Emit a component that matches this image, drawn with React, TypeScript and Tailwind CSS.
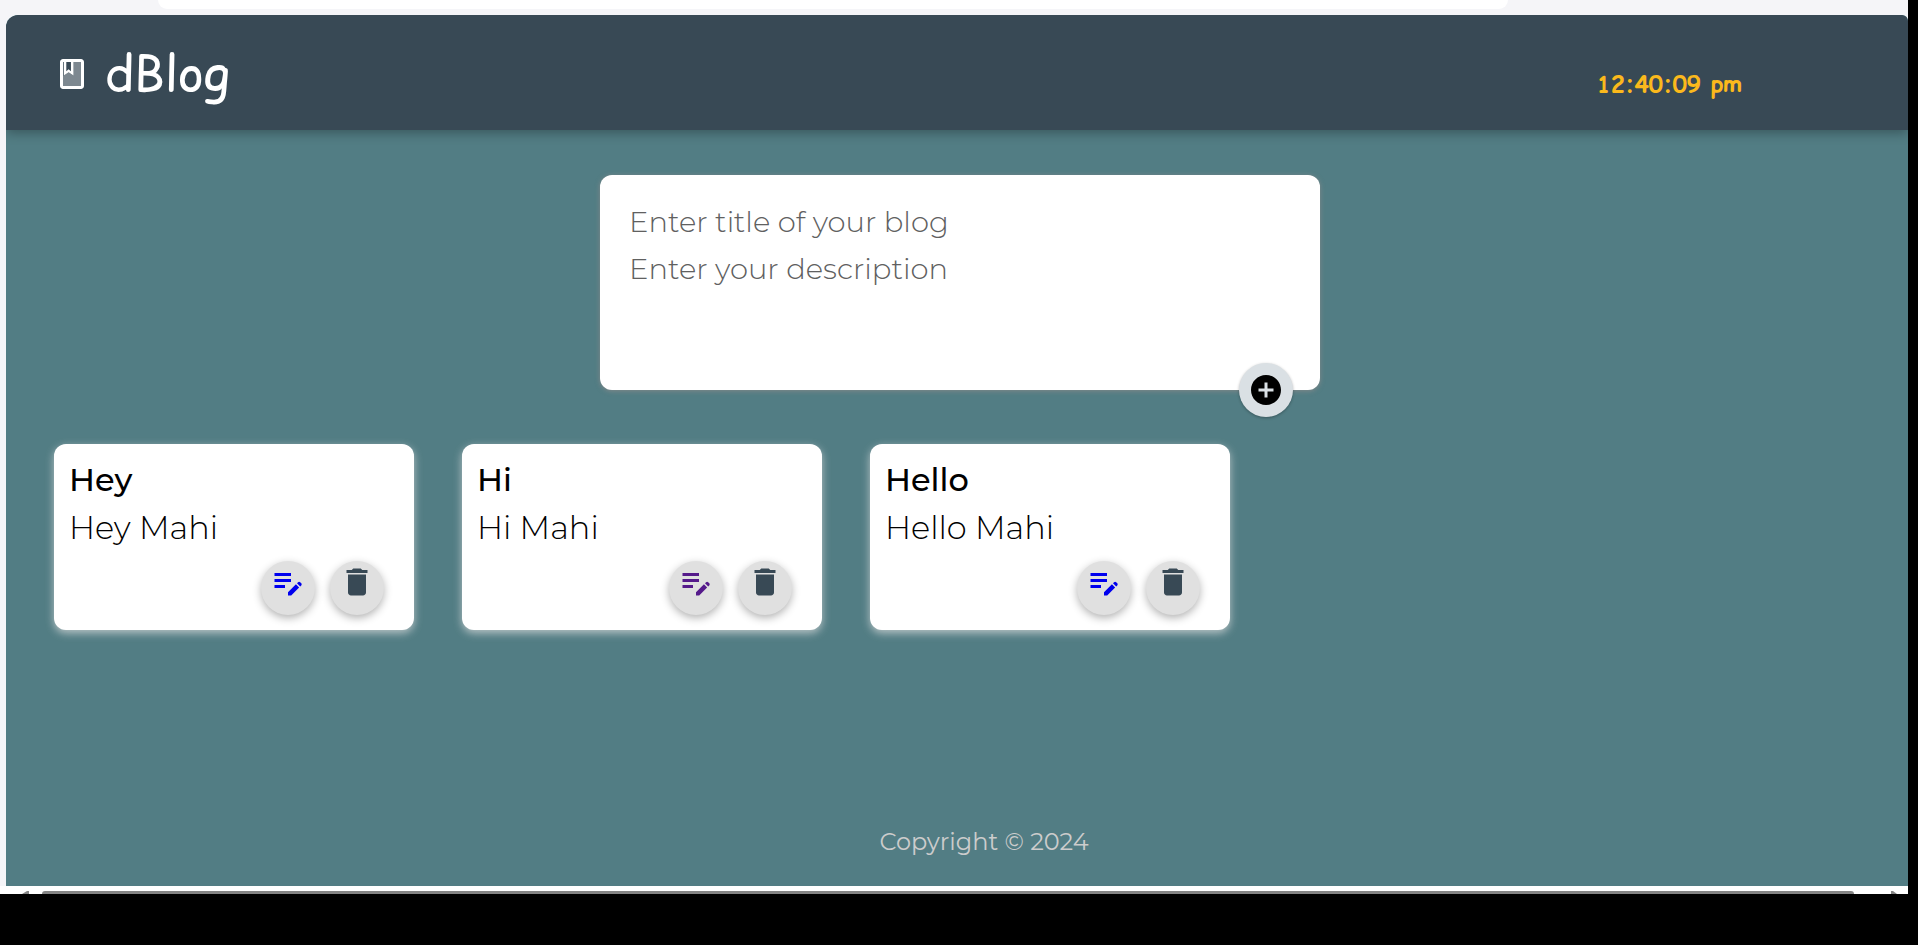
import { useState } from "react";
import { MdAddCircle, MdDelete, MdEditNote } from "react-icons/md";

type Post = { title: string; body: string; visited?: boolean };

const initialPosts: Post[] = [
  { title: "Hey", body: "Hey Mahi" },
  { title: "Hi", body: "Hi Mahi", visited: true },
  { title: "Hello", body: "Hello Mahi" },
];

function BookIcon() {
  return (
    <svg viewBox="0 0 24 24" className="size-9" fill="currentColor" aria-hidden="true">
      <path opacity="0.35" d="M13 4v9l-3.250-2.250L6.500 13H6v7h12V4z" />
      <path d="M18 2H6c-1.100 0-2 .9-2 2v16c0 1.100.9 2 2 2h12c1.100 0 2-.9 2-2V4c0-1.100-.9-2-2-2zm0 18H6V4h12v16z" />
      <path d="M6.500 3.500H8.200v6.700l1.550-1.400 1.550 1.400V3.500H13V13l-3.250-2.250L6.500 13z" />
    </svg>
  );
}

function Header() {
  return (
    <header className="flex h-[115px] items-center justify-between rounded-tl-xl rounded-tr-md bg-[#384955] pr-[167px] pl-12 shadow-[0_3px_12px_rgba(0,0,0,0.3)]">
      <div className="flex items-center gap-[15px] pt-[3px] text-white">
        <BookIcon />
        <h1 className="font-['Comic_Relief','Comic_Sans_MS','Comic_Neue',Lato,sans-serif] text-[49px] leading-[60px] font-normal">dBlog</h1>
      </div>
      <time className="pt-6 font-['Comic_Relief','Comic_Sans_MS','Comic_Neue',Lato,sans-serif] text-[23px] font-bold text-[#fbb91c]">
        12:40:09 pm
      </time>
    </header>
  );
}

function BlogForm() {
  return (
    <form
      onSubmit={(e) => e.preventDefault()}
      className="relative mx-auto flex h-[215px] w-full max-w-[720px] flex-col rounded-xl bg-white px-[29px] pt-[23px] shadow-[0_1px_5px_rgba(138,138,138,0.9)]"
    >
      <input
        aria-label="Title"
        placeholder="Enter title of your blog"
        className="h-[47px] text-[29px] font-light outline-none placeholder:text-[#606060]"
      />
      <textarea
        aria-label="Description"
        placeholder="Enter your description"
        className="h-[120px] resize-none text-[29px] leading-[47px] font-light outline-none placeholder:text-[#606060]"
      />
      <button
        aria-label="Add blog"
        className="absolute right-[27px] -bottom-[27px] flex size-[54px] items-center justify-center rounded-full bg-[#dae0e4] text-black shadow-[0_1px_3px_rgba(0,0,0,0.3)]"
      >
        <MdAddCircle className="size-9" />
      </button>
    </form>
  );
}

const roundButton =
  "flex size-[54px] justify-center rounded-full bg-[#e0e0e0] pt-[3px] shadow-[0_3px_9px_rgba(0,0,0,0.3)]";

function Card({ post, onDelete }: { post: Post; onDelete: () => void }) {
  return (
    <article className="flex h-[186px] w-[360px] flex-col rounded-xl bg-white pt-3 pr-[30px] pb-[15px] pl-[15px] text-black shadow-[0_3px_8px_rgba(220,220,220,0.75)]">
      <h2 className="text-[32px] leading-[48px] font-medium">{post.title}</h2>
      <p className="text-[32px] leading-[48px] font-light">{post.body}</p>
      <div className="mt-auto flex justify-end gap-[15px]">
        <a
          href="#edit"
          aria-label={`Edit ${post.title}`}
          className={`${roundButton} ${post.visited ? "text-[#551a8b]" : "text-[#0000ee]"}`}
        >
          <MdEditNote className="size-9" />
        </a>
        <button aria-label={`Delete ${post.title}`} onClick={onDelete} className={`${roundButton} text-[#384955]`}>
          <MdDelete className="size-9" />
        </button>
      </div>
    </article>
  );
}

export default function App() {
  const [posts, setPosts] = useState(initialPosts);

  return (
    <div className="flex min-h-screen flex-col bg-black pr-[10px] font-[Montserrat,Inter,sans-serif]">
      <div className="h-[15px] bg-[#f5f5f8] pr-[400px] pl-[158px]">
        <div className="h-[9px] rounded-b-[20px] bg-white" />
      </div>
      <div className="flex flex-1 flex-col bg-[#f5f5f8] pl-1.5">
        <div className="flex flex-1 flex-col overflow-hidden rounded-tl-xl rounded-tr-md bg-[#527d84]">
          <Header />
          <main className="flex flex-1 flex-col pt-[45px] pr-[42px] pl-12">
            <BlogForm />
            <section className="mt-[54px] flex flex-wrap gap-12">
              {posts.map((post) => (
                <Card key={post.title} post={post} onDelete={() => setPosts(posts.filter((p) => p !== post))} />
              ))}
            </section>
          </main>
          <footer className="pb-[26px] pl-[54px] text-center text-2xl leading-9 text-[#cccccc]">Copyright © 2024</footer>
        </div>
      </div>
      <div className="flex h-2 items-end justify-between overflow-hidden bg-white pr-2 pl-5">
        <svg viewBox="0 0 10 3" className="h-[3px] w-[10px]" fill="#858585" aria-hidden="true">
          <path d="M2 3 7 0h2v3z" />
        </svg>
        <div className="ml-3 h-[3px] flex-1 rounded-t-sm bg-[#858585]" />
        <svg viewBox="0 0 10 3" className="ml-9 h-[3px] w-[10px]" fill="#858585" aria-hidden="true">
          <path d="M1 3V0h2l4 3z" />
        </svg>
      </div>
      <div className="h-[51px]" />
    </div>
  );
}
